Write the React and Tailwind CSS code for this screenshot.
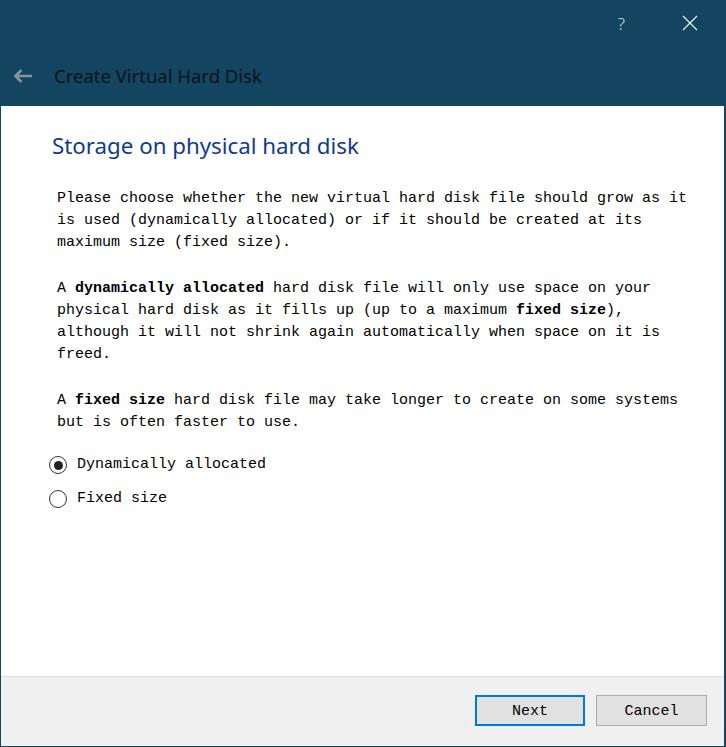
export default function App() {
  const mono = { fontFamily: '"Liberation Mono", "DejaVu Sans Mono", monospace' };

  return (
    <div className="h-[747px] w-[726px] flex flex-col bg-[#134560]">
      {/* title bar */}
      <div className="h-[106px] flex flex-col text-white" style={{ fontFamily: '"Noto Sans", "Open Sans", sans-serif' }}>
        <div className="h-[46px] flex items-center justify-end pr-[28px] gap-[57px]">
          <span className="text-[17px] font-light text-[#d7dee3] leading-none">?</span>
          <svg width="16" height="16" viewBox="0 0 16 16" className="text-[#e9eef1]">
            <path d="M1 1 L15 15 M15 1 L1 15" stroke="currentColor" strokeWidth="1.2" fill="none" />
          </svg>
        </div>
        <div className="flex-1 flex items-center pl-[13px] pb-[1px]">
          <svg width="20" height="16" viewBox="0 0 20 16" className="text-[#8694a0]">
            <path d="M19 8 H2.5 M8.5 2 L2.5 8 L8.5 14" stroke="currentColor" strokeWidth="2.6" fill="none" />
          </svg>
          <span className="ml-[21px] text-[18.5px] text-[#08141c]">Create Virtual Hard Disk</span>
        </div>
      </div>

      {/* page */}
      <div className="flex-1 flex flex-col border-l border-r-2 border-b border-[#134560]">
        <div className="flex-1 bg-white pl-[51px] pt-[25px]">
          <h1 className="text-[22.3px] leading-[30px] text-[#0f3a92]" style={{ fontFamily: '"Noto Sans", "Open Sans", sans-serif' }}>
            Storage on physical hard disk
          </h1>
          <div className="ml-[5px] mt-[27px] w-[640px] text-[15px] leading-[22px] text-black flex flex-col gap-[24px]" style={mono}>
            <p>
              Please choose whether the new virtual hard disk file should grow as it is used (dynamically allocated) or if it should be created at its maximum size (fixed size).
            </p>
            <p>
              A <b>dynamically allocated</b> hard disk file will only use space on your physical hard disk as it fills up (up to a maximum <b>fixed size</b>), although it will not shrink again automatically when space on it is freed.
            </p>
            <p>
              A <b>fixed size</b> hard disk file may take longer to create on some systems but is often faster to use.
            </p>
          </div>
          <div className="-ml-[3px] mt-[20px] flex flex-col gap-[12px] text-[15px] leading-[22px]" style={mono}>
            <label className="flex items-center gap-[10px]">
              <span className="w-[18px] h-[18px] rounded-full border border-[#333333] bg-white flex items-center justify-center">
                <span className="w-[9px] h-[9px] rounded-full bg-[#222222]" />
              </span>
              <span>Dynamically allocated</span>
            </label>
            <label className="flex items-center gap-[10px]">
              <span className="w-[18px] h-[18px] rounded-full border border-[#333333] bg-white" />
              <span>Fixed size</span>
            </label>
          </div>
        </div>

        {/* footer */}
        <div className="h-[70px] bg-[#f0f0f0] border-t border-[#dfdfdf] flex justify-end items-start pt-[18px] pr-[17px] gap-[11px] text-[15px]" style={mono}>
          <button className="w-[110px] h-[31px] pt-[3px] bg-[#e1e1e1] border-2 border-[#0078d7] text-black">Next</button>
          <button className="w-[111px] h-[31px] pt-[3px] bg-[#e1e1e1] border border-[#adadad] text-black">Cancel</button>
        </div>
      </div>
    </div>
  );
}
